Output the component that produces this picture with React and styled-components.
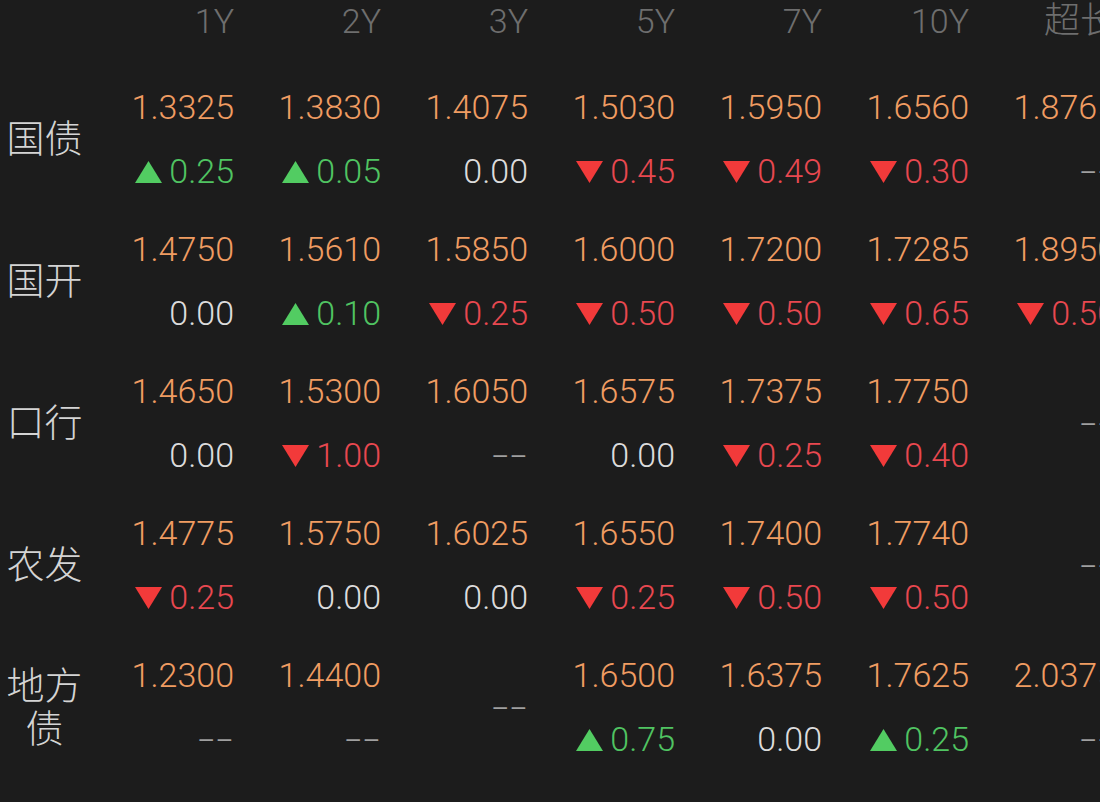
import React from "react";
import styled, { createGlobalStyle } from "styled-components";

const Global = createGlobalStyle`
  html, body { margin: 0; padding: 0; background: #1c1c1c; }
  * { box-sizing: border-box; }
`;

const COLS = `87px repeat(7, 147px)`;

const Page = styled.div`
  width: 1100px;
  height: 802px;
  overflow: hidden;
  background: #1c1c1c;
  font-family: Roboto, "Noto Sans CJK SC", sans-serif;
`;

const HeaderRow = styled.div`
  display: grid;
  grid-template-columns: ${COLS};
  width: max-content;
  height: 75px;
  padding-top: 1px;
`;

const HeadCell = styled.div`
  font-size: ${(p) => (p.$cjk ? "36px" : "34px")};
  font-weight: 300;
  line-height: 40px;
  color: #6e6e6e;
  text-align: right;
  white-space: nowrap;
`;

const GroupRow = styled.div`
  display: grid;
  grid-template-columns: ${COLS};
  width: max-content;
  height: 128px;
  margin-bottom: 14px;
`;

const Label = styled.div`
  display: flex;
  align-items: center;
  justify-content: center;
  text-align: center;
  font-family: "Noto Sans CJK SC", sans-serif;
  font-size: 38px;
  font-weight: 300;
  line-height: 43px;
  color: #d4d4d4;
  padding: 0 4px 7px 6px;
`;

const Cell = styled.div`
  display: flex;
  flex-direction: column;
  justify-content: ${(p) => (p.$empty ? "center" : "flex-start")};
  text-align: right;
  white-space: nowrap;
`;

const Line = styled.div`
  font-size: 34px;
  font-weight: 300;
  line-height: 64px;
  color: ${(p) =>
    p.$tone === "value"
      ? "#f09c62"
      : p.$tone === "up"
      ? "#50c462"
      : p.$tone === "down"
      ? "#e84850"
      : p.$tone === "none"
      ? "#a0a0a0"
      : "#dcdcdc"};
`;

const Dash = styled.span`
  display: inline-block;
  transform: scaleX(1.7);
  transform-origin: right center;
  letter-spacing: 1px;
`;

const Tri = styled.svg`
  width: 27px;
  height: 22px;
  margin-right: 7px;
  vertical-align: baseline;
  fill: ${(p) => (p.$dir === "up" ? "#52cc62" : "#f23a3a")};
`;

const Arrow = ({ dir }) => (
  <Tri $dir={dir} viewBox="0 0 27 22">
    {dir === "up" ? (
      <polygon points="0,22 13.5,0 27,22" />
    ) : (
      <polygon points="0,0 27,0 13.5,22" />
    )}
  </Tri>
);

const headers = ["1Y", "2Y", "3Y", "5Y", "7Y", "10Y", "超长"];

const rows = [
  {
    label: "国债",
    cells: [
      ["1.3325", "up", "0.25"],
      ["1.3830", "up", "0.05"],
      ["1.4075", "flat", "0.00"],
      ["1.5030", "down", "0.45"],
      ["1.5950", "down", "0.49"],
      ["1.6560", "down", "0.30"],
      ["1.8765", "none", "--"],
    ],
  },
  {
    label: "国开",
    cells: [
      ["1.4750", "flat", "0.00"],
      ["1.5610", "up", "0.10"],
      ["1.5850", "down", "0.25"],
      ["1.6000", "down", "0.50"],
      ["1.7200", "down", "0.50"],
      ["1.7285", "down", "0.65"],
      ["1.8950", "down", "0.50"],
    ],
  },
  {
    label: "口行",
    cells: [
      ["1.4650", "flat", "0.00"],
      ["1.5300", "down", "1.00"],
      ["1.6050", "none", "--"],
      ["1.6575", "flat", "0.00"],
      ["1.7375", "down", "0.25"],
      ["1.7750", "down", "0.40"],
      null,
    ],
  },
  {
    label: "农发",
    cells: [
      ["1.4775", "down", "0.25"],
      ["1.5750", "flat", "0.00"],
      ["1.6025", "flat", "0.00"],
      ["1.6550", "down", "0.25"],
      ["1.7400", "down", "0.50"],
      ["1.7740", "down", "0.50"],
      null,
    ],
  },
  {
    label: "地方债",
    cells: [
      ["1.2300", "none", "--"],
      ["1.4400", "none", "--"],
      null,
      ["1.6500", "up", "0.75"],
      ["1.6375", "flat", "0.00"],
      ["1.7625", "up", "0.25"],
      ["2.0375", "none", "--"],
    ],
  },
];

export default function App() {
  return (
    <Page>
      <Global />
      <HeaderRow>
        <div />
        {headers.map((h) => (
          <HeadCell key={h} $cjk={h === "超长"}>
            {h}
          </HeadCell>
        ))}
      </HeaderRow>
      {rows.map((r) => (
        <GroupRow key={r.label}>
          <Label>{r.label}</Label>
          {r.cells.map((c, i) =>
            c ? (
              <Cell key={i}>
                <Line $tone="value">{c[0]}</Line>
                <Line $tone={c[1]}>
                  {(c[1] === "up" || c[1] === "down") && <Arrow dir={c[1]} />}
                  {c[1] === "none" ? <Dash>{c[2]}</Dash> : c[2]}
                </Line>
              </Cell>
            ) : (
              <Cell key={i} $empty>
                <Line $tone="none">
                  <Dash>--</Dash>
                </Line>
              </Cell>
            )
          )}
        </GroupRow>
      ))}
    </Page>
  );
}
